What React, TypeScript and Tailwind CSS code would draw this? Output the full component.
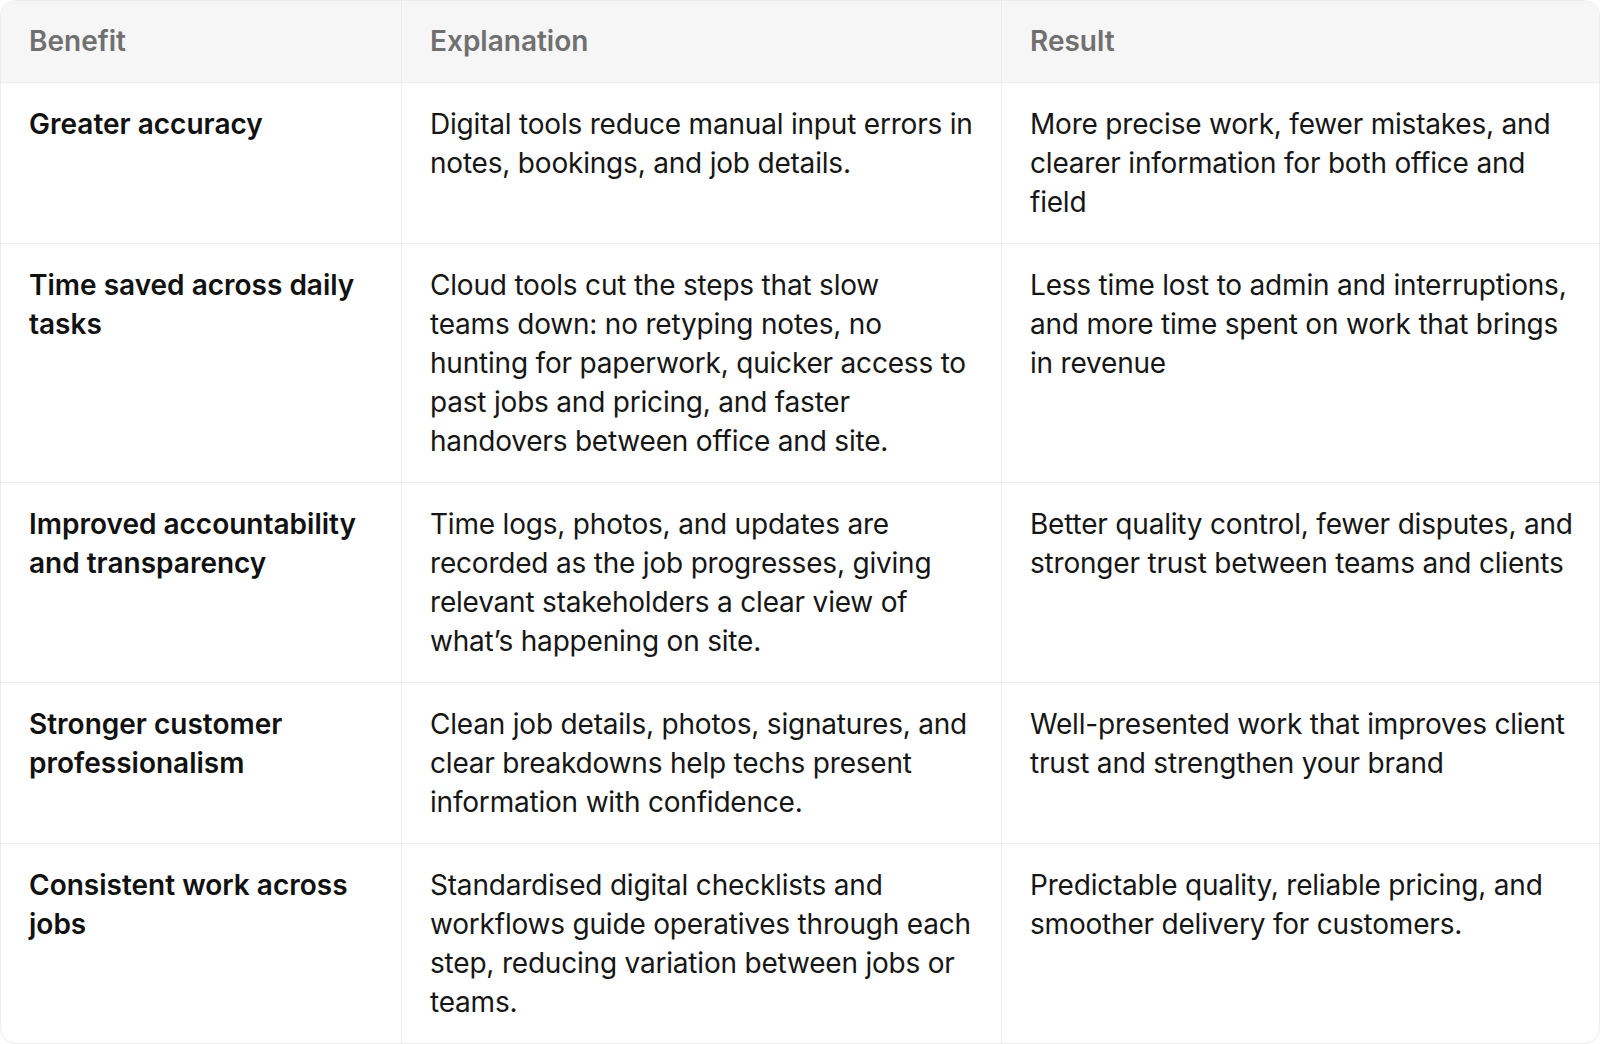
const rows = [
  {
    benefit: ["Greater accuracy"],
    explanation: [
      "Digital tools reduce manual input errors in",
      "notes, bookings, and job details.",
    ],
    result: [
      "More precise work, fewer mistakes, and",
      "clearer information for both office and",
      "field",
    ],
  },
  {
    benefit: ["Time saved across daily", "tasks"],
    explanation: [
      "Cloud tools cut the steps that slow",
      "teams down: no retyping notes, no",
      "hunting for paperwork, quicker access to",
      "past jobs and pricing, and faster",
      "handovers between office and site.",
    ],
    result: [
      "Less time lost to admin and interruptions,",
      "and more time spent on work that brings",
      "in revenue",
    ],
  },
  {
    benefit: ["Improved accountability", "and transparency"],
    explanation: [
      "Time logs, photos, and updates are",
      "recorded as the job progresses, giving",
      "relevant stakeholders a clear view of",
      "what\u2019s happening on site.",
    ],
    result: [
      "Better quality control, fewer disputes, and",
      "stronger trust between teams and clients",
    ],
  },
  {
    benefit: ["Stronger customer", "professionalism"],
    explanation: [
      "Clean job details, photos, signatures, and",
      "clear breakdowns help techs present",
      "information with confidence.",
    ],
    result: [
      "Well-presented work that improves client",
      "trust and strengthen your brand",
    ],
  },
  {
    benefit: ["Consistent work across", "jobs"],
    explanation: [
      "Standardised digital checklists and",
      "workflows guide operatives through each",
      "step, reducing variation between jobs or",
      "teams.",
    ],
    result: [
      "Predictable quality, reliable pricing, and",
      "smoother delivery for customers.",
    ],
  },
];

const Lines = ({ lines }: { lines: string[] }) => (
  <>
    {lines.map((line) => (
      <span key={line} className="block whitespace-nowrap">
        {line}
      </span>
    ))}
  </>
);

const App = () => {
  return (
    <div
      className="w-[1600px] bg-white"
      style={{ fontFamily: "Inter, 'Noto Sans', sans-serif" }}
    >
      <div className="overflow-hidden rounded-2xl border border-[#ececec]">
        <div className="grid grid-cols-[400px_600px_1fr] bg-[#f6f6f6] text-[28px] font-semibold leading-[39px] text-[#707070]">
          <div className="px-7 py-[21px]">Benefit</div>
          <div className="border-l border-[#ececec] px-7 py-[21px]">Explanation</div>
          <div className="border-l border-[#ececec] px-7 py-[21px]">Result</div>
        </div>
        {rows.map((row) => (
          <div
            key={row.benefit[0]}
            className="grid grid-cols-[400px_600px_1fr] border-t border-[#ececec] text-[28px] leading-[39px] tracking-[-0.2px] text-[#161616]"
          >
            <div className="px-7 py-[21.5px] font-semibold tracking-normal text-[#111111]">
              <Lines lines={row.benefit} />
            </div>
            <div className="border-l border-[#ececec] px-7 py-[21.5px]">
              <Lines lines={row.explanation} />
            </div>
            <div className="border-l border-[#ececec] px-7 py-[21.5px]">
              <Lines lines={row.result} />
            </div>
          </div>
        ))}
      </div>
    </div>
  );
};

export default App;
